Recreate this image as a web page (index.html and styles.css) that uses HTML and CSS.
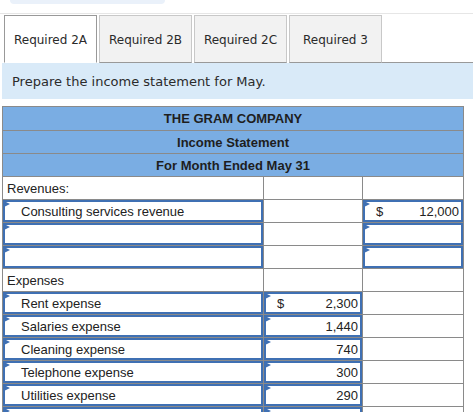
FILE: index.html
```html
<!DOCTYPE html>
<html>
<head>
<meta charset="utf-8">
<link rel="stylesheet" href="styles.css">
</head>
<body>
<div class="topbox"></div>
<div class="rule"></div>
<div class="tabs">
  <div class="tab active">Required 2A</div>
  <div class="tab">Required 2B</div>
  <div class="tab">Required 2C</div>
  <div class="tab">Required 3</div>
  <div class="tabfill"></div>
</div>
<div class="prompt">Prepare the income statement for May.</div>
<table class="stmt">
  <colgroup><col class="c1"><col class="c2"><col class="c3"></colgroup>
  <tr class="hd"><td colspan="3">THE GRAM COMPANY</td></tr>
  <tr class="hd"><td colspan="3">Income Statement</td></tr>
  <tr class="hd"><td colspan="3">For Month Ended May 31</td></tr>
  <tr><td class="lbl">Revenues:</td><td></td><td></td></tr>
  <tr>
    <td><div class="inp ind"><span class="flag"></span>Consulting services revenue</div></td>
    <td></td>
    <td><div class="inp num"><span class="flag"></span><span class="cur">$</span><span>12,000</span></div></td>
  </tr>
  <tr>
    <td><div class="inp"><span class="flag"></span></div></td>
    <td></td>
    <td><div class="inp"><span class="flag"></span></div></td>
  </tr>
  <tr>
    <td><div class="inp"><span class="flag"></span></div></td>
    <td></td>
    <td><div class="inp"><span class="flag"></span></div></td>
  </tr>
  <tr><td class="lbl">Expenses</td><td></td><td></td></tr>
  <tr>
    <td><div class="inp ind"><span class="flag"></span>Rent expense</div></td>
    <td><div class="inp num n2"><span class="flag"></span><span class="cur">$</span><span>2,300</span></div></td>
    <td></td>
  </tr>
  <tr>
    <td><div class="inp ind"><span class="flag"></span>Salaries expense</div></td>
    <td><div class="inp num n2"><span class="flag"></span><span></span><span>1,440</span></div></td>
    <td></td>
  </tr>
  <tr>
    <td><div class="inp ind"><span class="flag"></span>Cleaning expense</div></td>
    <td><div class="inp num n2"><span class="flag"></span><span></span><span>740</span></div></td>
    <td></td>
  </tr>
  <tr>
    <td><div class="inp ind"><span class="flag"></span>Telephone expense</div></td>
    <td><div class="inp num n2"><span class="flag"></span><span></span><span>300</span></div></td>
    <td></td>
  </tr>
  <tr>
    <td><div class="inp ind"><span class="flag"></span>Utilities expense</div></td>
    <td><div class="inp num n2"><span class="flag"></span><span></span><span>290</span></div></td>
    <td></td>
  </tr>
  <tr>
    <td><div class="inp"><span class="flag"></span></div></td>
    <td><div class="inp"><span class="flag"></span></div></td>
    <td></td>
  </tr>
</table>
</body>
</html>
```
FILE: styles.css
```css
html, body {
  margin: 0;
  padding: 0;
  background: #fff;
  overflow: hidden;
}
body {
  font-family: "DejaVu Sans", Verdana, sans-serif;
}
.topbox {
  margin-left: 10px;
  width: 155px;
  height: 4px;
  background: #eaf1fa;
  border-radius: 0 0 6px 6px;
}
.rule {
  margin-top: 9px;
  height: 1px;
  background: #e6e6e6;
}
.tabs {
  display: flex;
  margin-top: 1px;
  padding-left: 4px;
  height: 48px;
}
.tab {
  box-sizing: border-box;
  width: 93px;
  height: 48px;
  margin-right: 2px;
  border: 1px solid #c8c8c8;
  border-bottom: 1px solid #999;
  background: #f2f2f2;
  color: #2a2a2a;
  font-size: 12px;
  display: flex;
  align-items: center;
  justify-content: center;
  padding-top: 1px;
}
.tab.active {
  background: #fff;
  border-color: #999;
  border-bottom-color: #fff;
}
.tabfill {
  flex: 1;
  border-bottom: 1px solid #999;
  margin-left: -2px;
}
.prompt {
  margin-left: 2px;
  height: 36px;
  background: #d9eaf8;
  color: #2b2b2b;
  font-size: 13px;
  display: flex;
  align-items: center;
  padding-left: 10px;
}
.stmt {
  margin: 7px 0 0 2px;
  border-collapse: collapse;
  table-layout: fixed;
  width: 462px;
  font-family: "Liberation Sans", Arial, sans-serif;
  font-size: 13px;
  color: #222;
}
.c1 { width: 261px; }
.c2 { width: 99px; }
.c3 { width: 101px; }
.stmt td {
  border: 1px solid #8a8a8a;
  padding: 0;
  height: 22px;
}
.hd td {
  background: #7aade3;
  text-align: center;
  font-weight: bold;
  color: #1e1e1e;
  height: 22px;
}
.hd:first-child td { height: 23px; }
.lbl { padding-left: 4px !important; }
.inp {
  position: relative;
  box-sizing: border-box;
  height: 22px;
  border: 2px solid #3f70b3;
  display: flex;
  align-items: center;
}
.flag {
  position: absolute;
  left: -1px;
  top: -1px;
  width: 0;
  height: 0;
  border-top: 3px solid transparent;
  border-bottom: 3px solid transparent;
  border-left: 6px solid #3f70b3;
}
.ind { padding-left: 16px; }
.num {
  justify-content: space-between;
  padding: 0 2px 0 11px;
}
.n2 { padding-right: 2px; }
.cur { display: inline-block; }
```
